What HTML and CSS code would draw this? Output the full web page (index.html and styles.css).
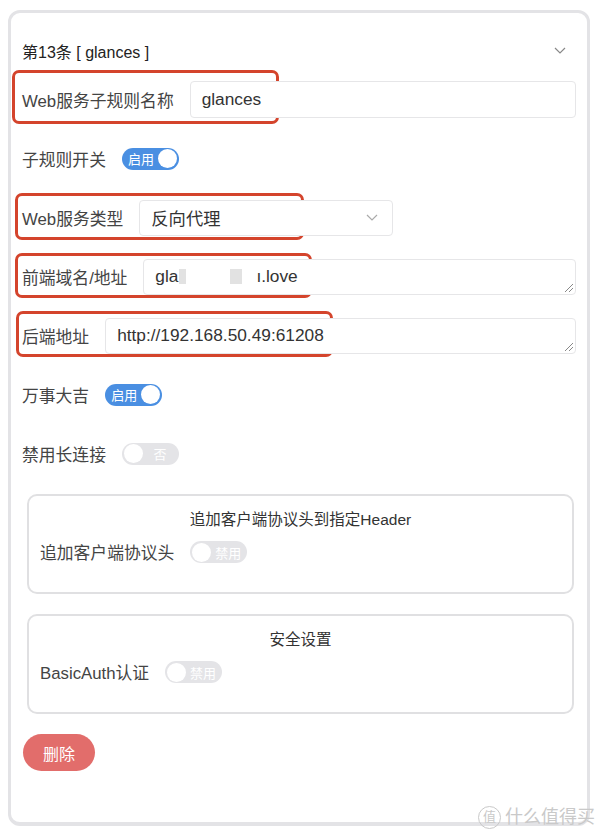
FILE: index.html
```html
<!DOCTYPE html>
<html lang="zh-CN">
<head>
  <meta charset="UTF-8"/>
  <meta name="viewport" content="width=device-width,initial-scale=1.0"/>
  <title>Web服务子规则</title>
  <link rel="stylesheet" href="styles.css">
</head>
<body>

<div class="card">
  <div class="head">
    <span>第13条 [ glances ]</span>
    <svg class="chev" width="12" height="7" viewBox="0 0 12 7"><path d="M1 1l5 5 5-5" fill="none" stroke="#888" stroke-width="1.2"/></svg>
  </div>

  <div class="row">
    <span class="mark mark-name"></span>
    <label>Web服务子规则名称</label>
    <div class="field">glances</div>
  </div>

  <div class="row">
    <label>子规则开关</label>
    <span class="switch on"><em>启用</em><i></i></span>
  </div>

  <div class="row">
    <span class="mark mark-type"></span>
    <label>Web服务类型</label>
    <div class="field select">
      反向代理
      <svg width="12" height="7" viewBox="0 0 12 7"><path d="M1 1l5 5 5-5" fill="none" stroke="#aaa" stroke-width="1.2"/></svg>
    </div>
  </div>

  <div class="row">
    <span class="mark mark-front"></span>
    <label>前端域名/地址</label>
    <div class="field area">gla<b class="hide small"></b><b class="hide"></b>ı.love<span class="grip"></span></div>
  </div>

  <div class="row">
    <span class="mark mark-back"></span>
    <label>后端地址</label>
    <div class="field area">http://192.168.50.49:61208<span class="grip"></span></div>
  </div>

  <div class="row">
    <label>万事大吉</label>
    <span class="switch on"><em>启用</em><i></i></span>
  </div>

  <div class="row">
    <label>禁用长连接</label>
    <span class="switch"><i></i><em>否</em></span>
  </div>

  <div class="group">
    <div class="group-title">追加客户端协议头到指定Header</div>
    <div class="group-row">
      <label>追加客户端协议头</label>
      <span class="switch"><i></i><em>禁用</em></span>
    </div>
  </div>

  <div class="group">
    <div class="group-title">安全设置</div>
    <div class="group-row">
      <label>BasicAuth认证</label>
      <span class="switch"><i></i><em>禁用</em></span>
    </div>
  </div>

  <button class="del">删除</button>
</div>

<div class="watermark"><span class="ring">值</span>什么值得买</div>

</body>
</html>
```

FILE: styles.css
```css
* {
  margin: 0;
  padding: 0;
  box-sizing: border-box;
}

body {
  font-family: "Liberation Sans", "Noto Sans CJK SC", sans-serif;
  background: #fff;
  color: #444;
  position: relative;
  height: 834px;
  padding-top: 10px;
  overflow: hidden;
}

.card {
  margin: 0 10px 0 8px;
  height: 816px;
  border: 3px solid #e3e3e6;
  border-bottom-width: 4px;
  border-radius: 12px;
  padding: 20px 11px 0 11px;
  display: flex;
  flex-direction: column;
}

.head {
  height: 35px;
  display: flex;
  align-items: center;
  justify-content: space-between;
  font-size: 16px;
  color: #222;
  padding-right: 10px;
  margin-bottom: 13px;
}

.row {
  position: relative;
  height: 37px;
  display: flex;
  align-items: center;
  gap: 16px;
  margin-bottom: 22px;
}

label {
  font-size: 16.8px;
  color: #444;
  white-space: nowrap;
}

.field {
  flex: 1;
  height: 37px;
  border: 1px solid #e6e6e8;
  border-radius: 4px;
  padding: 0 11px;
  display: flex;
  align-items: center;
  font-size: 17.3px;
  color: #333;
  background: #fff;
  position: relative;
}

.select {
  flex: 0 0 254px;
  height: 36px;
  justify-content: space-between;
  padding-right: 14px;
}

.area {
  height: 36px;
}

.grip {
  position: absolute;
  right: 2px;
  bottom: 2px;
  width: 8px;
  height: 8px;
  background: linear-gradient(135deg, transparent 45%, #888 45%, #888 55%, transparent 55%, transparent 70%, #888 70%, #888 80%, transparent 80%);
}

.hide {
  display: inline-block;
  width: 12px;
  height: 15px;
  background: #e2e2e2;
  margin: 0 14px 0 44px;
}

.hide.small {
  width: 7px;
  margin: 0 0 0 1px;
}

.mark {
  position: absolute;
  border: 3px solid #d4442c;
  border-radius: 7px;
  pointer-events: none;
}

.mark-name { left: -10px; top: -11px; width: 267px; height: 54px; }
.mark-type { left: -7px; top: -6px; width: 289px; height: 47px; }
.mark-front { left: -7px; top: -5px; width: 297px; height: 45px; }
.mark-back { left: -6px; top: -6px; width: 317px; height: 46px; }

.switch {
  width: 57px;
  height: 22px;
  border-radius: 11px;
  background: #e4e4e7;
  display: flex;
  align-items: center;
  justify-content: space-between;
  padding: 0 2px;
  flex-shrink: 0;
}

.switch.on {
  background: #4a8fe2;
  padding-left: 6px;
}

.switch i {
  width: 19px;
  height: 19px;
  border-radius: 50%;
  background: #fff;
}

.switch em {
  font-style: normal;
  font-size: 13px;
  color: #fff;
  flex: 1;
  text-align: center;
}

.switch.on em {
  text-align: left;
}

.group {
  height: 100px;
  margin: 0 2px 20px 5px;
  border: 2px solid #e0e0e2;
  border-radius: 10px;
  padding: 14px 11px 0 11px;
}

.group-title {
  text-align: center;
  font-size: 15.5px;
  line-height: 20px;
  color: #333;
  margin-bottom: 11px;
}

.group-row {
  display: flex;
  align-items: center;
  gap: 16px;
  height: 22px;
}

.del {
  align-self: flex-start;
  width: 72px;
  height: 37px;
  margin-left: 1px;
  border: none;
  border-radius: 19px;
  background: #e26d6b;
  color: #fff;
  font-family: inherit;
  font-size: 16px;
}

.watermark {
  position: absolute;
  left: 478px;
  top: 805px;
  display: flex;
  align-items: center;
  gap: 4px;
  font-size: 18px;
  line-height: 24px;
  color: #c9c9c9;
  white-space: nowrap;
}

.ring {
  width: 23px;
  height: 23px;
  border: 1.5px solid #c9c9c9;
  border-radius: 50%;
  font-size: 13px;
  display: flex;
  align-items: center;
  justify-content: center;
}
```
